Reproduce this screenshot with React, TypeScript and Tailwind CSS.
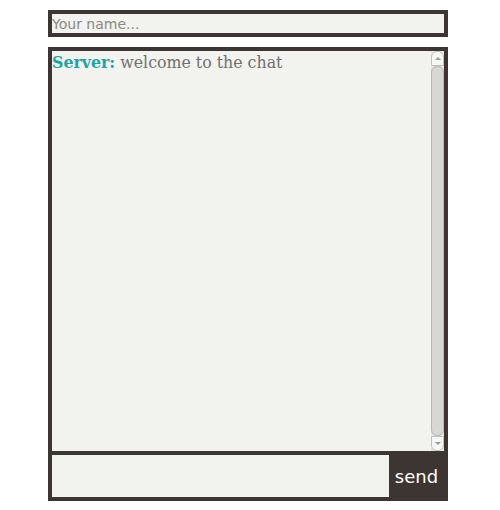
import { useState } from 'react';

type Message = {
  from: string;
  text: string;
};

const initialMessages: Message[] = [{ from: 'Server', text: 'welcome to the chat' }];

export default function App() {
  const [name, setName] = useState('');
  const [draft, setDraft] = useState('');
  const [messages, setMessages] = useState<Message[]>(initialMessages);

  const send = () => {
    const text = draft.trim();
    if (!text) return;
    setMessages((prev) => [...prev, { from: name.trim() || 'Anonymous', text }]);
    setDraft('');
  };

  return (
    <div className="min-h-[510px] bg-white pt-[10px]">
      <div className="ml-[48px] w-[400px]">
        <input
          type="text"
          value={name}
          onChange={(event) => setName(event.target.value)}
          placeholder="Your name..."
          className="block h-[27px] w-full border-4 border-[#3d3531] bg-[#f2f2ee] px-0 text-[14px] leading-[19px] text-[#555] outline-none placeholder:text-[#8a8a86] font-['DejaVu_Sans',sans-serif]"
        />

        <div className="mt-[10px] flex h-[408px] border-4 border-[#3d3531] bg-[#f2f2ee]">
          <div className="flex-1 overflow-hidden pt-[2px] font-['DejaVu_Serif',serif] text-[15.8px] leading-[20px] text-[#707070]">
            {messages.map((message, index) => (
              <p key={index}>
                <span className="font-bold text-[#1ba5a6]">{message.from}:</span> {message.text}
              </p>
            ))}
          </div>

          {/* fake gtk-style scrollbar */}
          <div className="flex w-[13px] flex-col bg-[#e6e5e1]">
            <div className="flex h-[15px] items-center justify-center rounded-t-[6px] border border-[#c2c1bd] bg-[#f6f6f4]">
              <span className="h-0 w-0 border-x-[3px] border-b-[3px] border-x-transparent border-b-[#9a9996]" />
            </div>
            <div className="flex-1 rounded-[6px] border border-[#b8b7b3] bg-[#d8d7d3]" />
            <div className="flex h-[15px] items-center justify-center rounded-b-[6px] border border-[#c2c1bd] bg-[#f6f6f4]">
              <span className="h-0 w-0 border-x-[3px] border-t-[3px] border-x-transparent border-t-[#9a9996]" />
            </div>
          </div>
        </div>

        <div className="flex h-[46px] border-x-4 border-b-4 border-[#3d3531] bg-[#f2f2ee]">
          <input
            type="text"
            value={draft}
            onChange={(event) => setDraft(event.target.value)}
            onKeyDown={(event) => {
              if (event.key === 'Enter') {
                event.preventDefault();
                send();
              }
            }}
            className="min-w-0 flex-1 bg-transparent px-1 text-[16px] outline-none font-['DejaVu_Sans',sans-serif]"
          />
          <button
            type="button"
            onClick={send}
            className="w-[55px] bg-[#3d3531] text-[18px] text-white font-['DejaVu_Sans',sans-serif]"
          >
            send
          </button>
        </div>
      </div>
    </div>
  );
}
